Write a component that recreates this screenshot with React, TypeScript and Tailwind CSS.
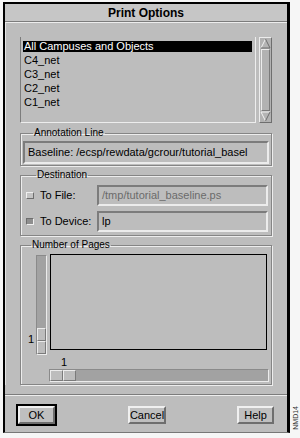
import React from "react";

const items = ["All Campuses and Objects", "C4_net", "C3_net", "C2_net", "C1_net"];

function Arrow({ up }: { up?: boolean }) {
  return (
    <svg width="11" height="11" viewBox="0 0 11 11" className="block">
      {up ? (
        <>
          <polygon points="5.5,1 10,10 1,10" fill="#b4b4b4" />
          <polyline points="1,10 5.5,1" fill="none" stroke="#f2f2f2" strokeWidth="1" />
          <polyline points="5.5,1 10,10 1,10" fill="none" stroke="#6e6e6e" strokeWidth="1" />
        </>
      ) : (
        <>
          <polygon points="1,1 10,1 5.5,10" fill="#b4b4b4" />
          <polyline points="5.5,10 1,1 10,1" fill="none" stroke="#f2f2f2" strokeWidth="1" />
          <polyline points="10,1 5.5,10" fill="none" stroke="#6e6e6e" strokeWidth="1" />
        </>
      )}
    </svg>
  );
}

function Field({ text, dim, className }: { text: string; dim?: boolean; className?: string }) {
  return (
    <div
      className={`flex items-center pl-[3px] bg-[#bdbdbd] border-2 border-t-[#7c7c7c] border-l-[#7c7c7c] border-b-[#ececec] border-r-[#ececec] text-[11px] leading-none whitespace-nowrap overflow-hidden ${
        dim ? "text-[#6b6b6b]" : "text-black"
      } ${className ?? ""}`}
    >
      {text}
    </div>
  );
}

function Group({ label, className, children }: { label: string; className?: string; children: React.ReactNode }) {
  return (
    <fieldset
      className={`border border-[#858585] shadow-[inset_1px_1px_0_#ededed,1px_1px_0_#ededed] ${className ?? ""}`}
    >
      <legend className="ml-[10px] px-[1px] text-[10px] leading-[10px] text-black">{label}</legend>
      {children}
    </fieldset>
  );
}

function Button({ label, className }: { label: string; className?: string }) {
  return (
    <div
      className={`flex items-center justify-center bg-[#bfbfbf] border-2 border-t-[#f0f0f0] border-l-[#f0f0f0] border-b-[#6e6e6e] border-r-[#6e6e6e] text-[11px] leading-none text-black ${
        className ?? ""
      }`}
    >
      {label}
    </div>
  );
}

export default function App() {
  return (
    <div className="w-[300px] h-[438px] bg-[#f6f6f6] flex pt-[2px] pl-[3px] font-['Liberation_Sans',Arial,sans-serif]">
      {/* dialog window */}
      <div className="w-[287px] h-[431px] flex flex-col bg-[#bdbdbd] border-l-2 border-t-2 border-r-[3px] border-black border-b border-b-[#777]">
        {/* title */}
        <div className="h-[17px] flex items-center justify-center bg-[#c6c6c6] text-[12px] font-bold text-black">
          Print Options
        </div>
        <div className="h-[1px] bg-[#7c7c7c]" />
        <div className="h-[1px] bg-[#ededed]" />

        <div className="flex flex-col px-[15px] pt-[14px] shadow-[inset_1px_0_0_#e4e4e4]">
          {/* list */}
          <div className="flex h-[86px] gap-[3px]">
            <div className="w-[236px] border-l border-l-[#7c7c7c] border-b border-b-[#ededed] border-r border-r-[#ededed] pl-[2px] pr-[3px] pt-[4px]">
              {items.map((it, i) => (
                <div key={it} className="h-[14px] flex items-start">
                  <div
                    className={`w-full h-[11px] flex items-center pl-[1px] text-[11px] leading-none whitespace-nowrap ${
                      i === 0 ? "bg-black text-white" : "text-black"
                    }`}
                  >
                    {it}
                  </div>
                </div>
              ))}
            </div>
            <div className="w-[13px] flex flex-col bg-[#b2b2b2] border border-t-[#ececec] border-l-[#ececec] border-b-[#6e6e6e] border-r-[#6e6e6e]">
              <Arrow up />
              <div className="flex-1 mx-[1px] border border-t-[#ececec] border-l-[#ececec] border-b-[#7a7a7a] border-r-[#7a7a7a]" />
              <Arrow />
            </div>
          </div>

          {/* annotation */}
          <Group label="Annotation Line" className="mt-[5px] px-[2px] pt-[3px] pb-[1px]">
            <Field text="Baseline: /ecsp/rewdata/gcrour/tutorial_basel" className="h-[23px]" />
          </Group>

          {/* destination */}
          <Group label="Destination" className="mt-[4px] pl-[5px] pr-[2px] pt-[5px] pb-[3px]">
            <div className="flex flex-col gap-[5px]">
              <div className="flex items-center h-[21px]">
                <div className="w-[8px] h-[7px] bg-[#c4c4c4] border border-t-[#f0f0f0] border-l-[#f0f0f0] border-b-[#6e6e6e] border-r-[#6e6e6e]" />
                <span className="ml-[6px] w-[57px] text-[11px] leading-none text-black">To File:</span>
                <Field text="/tmp/tutorial_baseline.ps" dim className="w-[171px] h-[21px]" />
              </div>
              <div className="flex items-center h-[21px]">
                <div className="w-[8px] h-[7px] bg-[#8e8e8e] border border-t-[#6e6e6e] border-l-[#6e6e6e] border-b-[#f0f0f0] border-r-[#f0f0f0]" />
                <span className="ml-[6px] w-[57px] text-[11px] leading-none text-black">To Device:</span>
                <Field text="lp" className="w-[171px] h-[21px]" />
              </div>
            </div>
          </Group>

          {/* number of pages */}
          <Group label="Number of Pages" className="mt-[4px] pt-[4px] pb-[2px]">
            <div className="flex">
              <div className="w-[15px] flex items-end justify-end pr-[2px] pb-[10px] text-[11px] leading-none text-black">
                1
              </div>
              <div className="mt-[1px] w-[11px] h-[100px] flex flex-col bg-[#a2a2a2] border border-t-[#8a8a8a] border-l-[#8a8a8a] border-b-[#ececec] border-r-[#ececec]">
                <div className="flex-1" />
                <div className="h-[13px] bg-[#bdbdbd] border border-t-[#ececec] border-l-[#ececec] border-b-[#7a7a7a] border-r-[#7a7a7a]" />
                <div className="h-[13px] bg-[#bdbdbd] border border-t-[#ececec] border-l-[#ececec] border-b-[#7a7a7a] border-r-[#7a7a7a]" />
              </div>
              <div className="ml-[3px] w-[217px] h-[96px] border border-black bg-[#bdbdbd]" />
            </div>
            <div className="pl-[40px] h-[14px] pt-[2px] text-[11px] leading-none text-black">1</div>
            <div className="ml-[28px] w-[220px] h-[13px] flex bg-[#a2a2a2] border border-t-[#8a8a8a] border-l-[#8a8a8a] border-b-[#ececec] border-r-[#ececec]">
              <div className="w-[13px] bg-[#bdbdbd] border border-t-[#ececec] border-l-[#ececec] border-b-[#7a7a7a] border-r-[#7a7a7a]" />
              <div className="w-[13px] bg-[#bdbdbd] border border-t-[#ececec] border-l-[#ececec] border-b-[#7a7a7a] border-r-[#7a7a7a]" />
            </div>
          </Group>
        </div>

        {/* separator */}
        <div className="mt-[9px] h-[1px] bg-[#7c7c7c]" />
        <div className="h-[1px] bg-[#ededed]" />

        {/* buttons */}
        <div className="flex items-center justify-between pl-[11px] pr-[13px] pt-[8px]">
          <div className="w-[41px] h-[22px] border-2 border-black">
            <Button label="OK" className="w-full h-full" />
          </div>
          <Button label="Cancel" className="w-[38px] h-[18px]" />
          <Button label="Help" className="w-[37px] h-[18px]" />
        </div>
      </div>

      {/* side code */}
      <div className="w-[10px] flex flex-col justify-end items-center pb-[8px]">
        <span className="[writing-mode:vertical-rl] rotate-180 text-[7px] leading-none text-[#333]">NMD14</span>
      </div>
    </div>
  );
}
